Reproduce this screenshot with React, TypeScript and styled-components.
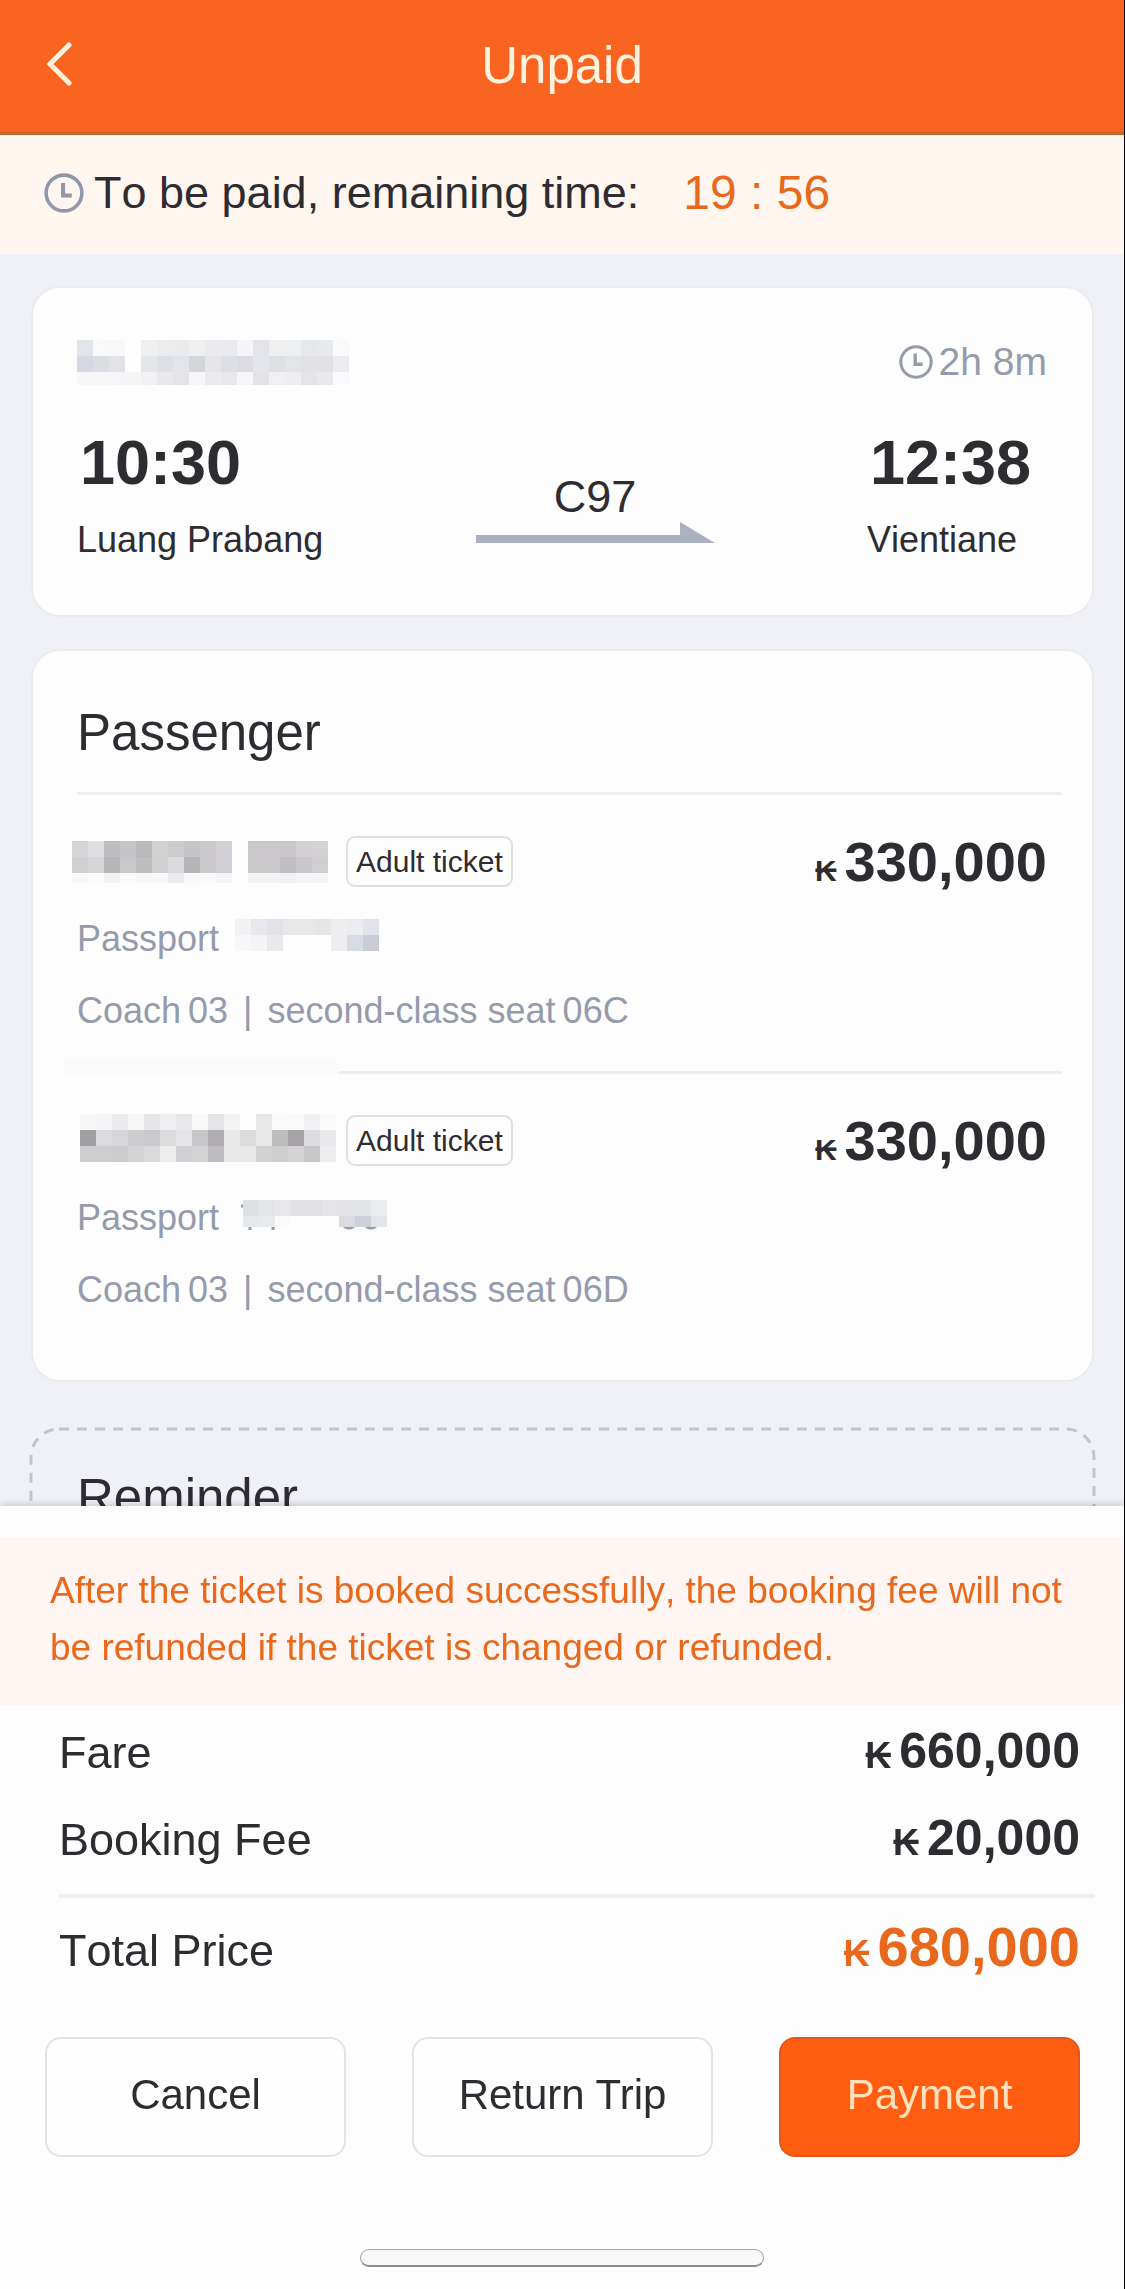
import React from "react";
import styled, { createGlobalStyle } from "styled-components";

const ink = "#2e2c30";
const muted = "#959bab";
const accent = "#e8691c";

const GlobalStyle = createGlobalStyle`
  *, *::before, *::after { box-sizing: border-box; }
  body {
    margin: 0;
    background: #fdfdfd;
    color: ${ink};
    font-family: "Liberation Sans", Arial, Helvetica, sans-serif;
    font-kerning: none;
  }
  h1, h2, p, dl, dt, dd { margin: 0; font-weight: 400; }
  svg { display: block; flex: none; }
`;

const Screen = styled.div`
  display: flex;
  flex-direction: column;
  height: 100vh;
  border-right: 1px solid #000;
`;

const Header = styled.header`
  display: grid;
  grid-template-columns: 1fr auto 1fr;
  align-items: center;
  height: 135px;
  padding: 0 40px;
  background: #f96521;
  border-bottom: 3px solid #c5642c;
`;

const BackButton = styled.button`
  justify-self: start;
  padding: 0;
  border: 0;
  background: none;
  color: #fff0d8;
`;

const HeaderTitle = styled.h1`
  font-size: 51px;
  line-height: 60px;
  color: #fff3e0;
`;

const Notice = styled.div`
  display: flex;
  align-items: center;
  height: 119px;
  padding: 0 44px 4px;
  background: #fff6f0;
  font-size: 45px;
  line-height: 60px;
`;

const NoticeLabel = styled.span`
  margin-left: 10px;
`;

const Countdown = styled.time`
  margin-left: 44px;
  font-size: 48px;
  color: ${accent};
`;

const Content = styled.main`
  flex: 1;
  min-height: 0;
  overflow-y: auto;
  scrollbar-width: none;
  padding: 32px 30px 0 31px;
  background: #f0f1f7;
`;

const Card = styled.section`
  margin-bottom: 32px;
  border: 2px solid #ececf0;
  border-radius: 29px;
  background: #fdfdfe;
`;

const TripCard = styled(Card)`
  padding: 51px 45px 53px 44px;
`;

const PassengerCard = styled(Card)`
  margin-bottom: 47px;
  padding: 52px 30px 30px 44px;
`;

const TripTop = styled.div`
  display: flex;
  justify-content: space-between;
  align-items: center;
  height: 46px;
  margin-bottom: 45px;
`;

const Duration = styled.span`
  display: flex;
  align-items: center;
  gap: 6px;
  font-size: 39px;
  line-height: 44px;
  color: ${muted};
`;

const Route = styled.div`
  display: flex;
  justify-content: space-between;
`;

const Stop = styled.div`
  min-width: 180px;
`;

const StopTime = styled.div`
  padding-left: 3px;
  font-size: 63px;
  font-weight: 700;
  line-height: 64px;
`;

const StopName = styled.div`
  margin-top: 24px;
  font-size: 36px;
  line-height: 44px;
`;

const Train = styled.div`
  display: flex;
  flex-direction: column;
  align-items: center;
  justify-content: flex-end;
  gap: 2px;
  padding-bottom: 19px;
  font-size: 45px;
  line-height: 46px;
`;

const SectionTitle = styled.h2`
  font-size: 51px;
  line-height: 60px;
`;

const Divider = styled.div<{ $masked?: boolean }>`
  position: relative;
  height: 3px;
  background: #eeeef1;

  &::before {
    content: "";
    display: ${(p) => (p.$masked ? "block" : "none")};
    position: absolute;
    left: -13px;
    bottom: -1px;
    width: 275px;
    height: 16px;
    background: #fbfbfc;
  }
`;

const PassengerHead = styled.div`
  padding-bottom: 29px;
`;

const Passenger = styled.article`
  padding: 41px 15px 38px 0;
`;

const NameRow = styled.div`
  display: flex;
  align-items: center;
  height: 51px;
  margin: 0 0 30px -5px;
`;

const TicketTag = styled.span`
  margin: 0 auto 0 10px;
  padding: 0 8px;
  border: 2px solid #dfdee3;
  border-radius: 9px;
  font-size: 30px;
  line-height: 47px;
`;

const Amount = styled.span<{ $size: number; $unit: number; $color?: string }>`
  font-size: ${(p) => p.$size}px;
  font-weight: 700;
  line-height: 60px;
  white-space: nowrap;
  color: ${(p) => p.$color ?? ink};

  small {
    margin-right: 8px;
    font-size: ${(p) => p.$unit}px;
    line-height: 1;
  }
`;

const Detail = styled.div`
  display: flex;
  align-items: center;
  height: 44px;
  font-size: 36px;
  line-height: 44px;
  color: ${muted};
`;

const DocumentRow = styled(Detail)`
  gap: 16px;
  margin-bottom: 28px;
`;

const SeatRow = styled(Detail)`
  gap: 7px;
`;

const Separator = styled.span`
  margin: 0 8px;
`;

const Reminder = styled.section`
  position: relative;
  height: 400px;
  padding: 39px 46px;
`;

const DashedOutline = styled.svg`
  position: absolute;
  inset: 0;
  width: 100%;
  height: 100%;
  overflow: visible;
`;

const Sheet = styled.footer`
  position: relative;
  padding: 31px 0 22px;
  background: #fdfdfd;
  box-shadow: 0 -1px 8px rgba(0, 0, 0, 0.2);
`;

const Warning = styled.p`
  padding: 25px 50px 29px;
  background: #fff5f3;
  font-size: 37px;
  line-height: 57px;
  color: ${accent};
`;

const Prices = styled.dl`
  padding: 16px 29px 0 59px;
`;

const PriceRow = styled.div`
  display: flex;
  justify-content: space-between;
  align-items: baseline;
  height: 60px;
  padding-right: 15px;
  font-size: 45px;
  line-height: 60px;

  & + & { margin-top: 27px; }
`;

const TotalBlock = styled.div`
  margin-top: 26px;
  padding-top: 19px;
  border-top: 4px solid #f0f0f1;
`;

const Actions = styled.div`
  display: grid;
  grid-template-columns: repeat(3, 1fr);
  gap: 66px;
  padding: 60px 44px 92px 45px;
`;

const ActionButton = styled.button<{ $primary?: boolean }>`
  height: 120px;
  padding: 0 0 4px;
  border: 2px solid ${(p) => (p.$primary ? "#e2581a" : "#e4e1e7")};
  border-radius: 16px;
  background: ${(p) => (p.$primary ? "#ff5e12" : "#fefefe")};
  color: ${(p) => (p.$primary ? "#ffe2bd" : ink)};
  font-family: inherit;
  font-size: 42px;
`;

const HomeIndicator = styled.div`
  width: 36%;
  height: 18px;
  margin: 0 auto;
  border: 1px solid #a5a5a5;
  border-bottom: 2px solid #8c8c8c;
  border-radius: 9px;
  background: #f8f8f8;
`;

function ClockIcon({ size, color }: { size: number; color: string }) {
  return (
    <svg width={size} height={size} viewBox="0 0 34 34" fill="none" stroke={color} strokeWidth="3" aria-hidden="true">
      <circle cx="17" cy="17" r="15.2" />
      <path d="M16.2 8.4v10.800h7.400" strokeWidth="3.4" />
    </svg>
  );
}

type MosaicProps = {
  rows: string[];
  width: number;
  height: number;
  left?: number;
  top?: number;
  last?: number;
  children?: React.ReactNode;
};

/* Each row is a space-separated list of colours; "-" leaves a cell empty. */
function Mosaic({ rows, width, height, left = 0, top = 0, last = 16, children }: MosaicProps) {
  return (
    <svg width={width} height={height} aria-hidden="true">
      {children}
      <g shapeRendering="crispEdges">
        {rows.map((row, y) =>
          row.split(" ").map((cell, x) =>
            cell === "-" ? null : (
              <rect
                key={`${x}-${y}`}
                x={left + x * 16}
                y={top + y * 16}
                width="16"
                height={y === rows.length - 1 ? last : 16}
                fill={`#${cell}`}
              />
            )
          )
        )}
      </g>
    </svg>
  );
}

const dateCells = [
  "e1e4e9 f7f9fa f8f8f9 - eeeff1 ebecee eaebed eeeff1 eaebed e8eaed f5f5f7 e2e4e8 eeeff1 eeeff1 e5e8eb e7eaec fafafb",
  "d6d9e3 dcdde3 e2e2e7 - e5e6ea dfe0e6 e3e4e9 d4d6dc e5e5ea dedfe4 dbdce2 e4e5ea dfe0e5 e3e4e8 e1e1e6 e1e1e6 ececf0",
  "f7f7f9 f7f7f8 f6f6f8 f5f5f6 f2f2f4 e9e9ec e4e4e8 f7f7f9 ebebee e8e8eb f6f6f8 e3e2e7 f0f0f3 eeedf1 e4e3e8 e9e9ed fafafc",
];

const firstNameCells = [
  "d5d4d6 dfdee1 bebdc1 c5c4c8 b9b8ba d2d2d3 cecbcf c6c4c8 cbc9cd d2d0d4 - cac8cb cac8cb c9c7cb d3d0d4 d4d2d5",
  "d0cfd1 d6d5d7 b6b5b7 c9c8cb bfbebf d0cfd1 dadadc b5b4b7 cac9cc d1cfd3 - cac8cb cac8cb c0bec1 c9c7ca d0ced1",
  "f8f8f8 fbfbfb f2f2f3 fafafa f8f8f9 f8f8f8 ebeaec f9f9f9 fafafa f4f3f5 - f3f3f4 f2f2f3 f1f0f2 f5f4f6 f5f4f6",
];

const secondNameCells = [
  "f7f7f8 f5f4f6 ebeaec f6f6f7 e6e5e8 efeef0 e7e6e9 f8f8f9 e4e4e6 f3f3f4 - e7e6e8 fbfbfb fafafb f0eff1 fafafb",
  "a19fa2 dcdbdd d7d7d9 cccbcd cbcacc dbdadd e4e3e5 c6c5c7 b0aeb2 e9e9ea dbdbdc e8e8e9 bfbebf a5a3a7 dcdbdd e9e8eb",
  "cecdd0 cfcdd0 cccbcd d4d3d5 dad9dc ededee d1cfd3 d4d3d6 bfbdc1 e9e8ea e8e7e9 d2d1d3 cecdcf d5d3d6 c8c6c9 eeedef",
];

const firstPassportCells = [
  "f2f2f5 e6e8eb e1e3e7 e6e8ea e6e8ea e4e6e8 eeeef1 ebecf0 e1e3e8",
  "f7f7f9 f4f4f6 e9e9ec - - - eeeef1 d9dbe2 cacdd6",
];

const secondPassportCells = [
  "dfe0e4 e3e4e7 e7e7eb e0e0e5 e1e1e5 e4e4e8 e2e3e7 e2e3e7 ebecf0",
  "e5e9ec e7ebee fafafb - - - d9dbe1 cfd1d9 e3e5ea",
];

const passengers = [
  {
    id: "c",
    seat: "06C",
    name: <Mosaic rows={firstNameCells} width={264} height={42} last={10} />,
    passport: <Mosaic rows={firstPassportCells} width={160} height={40} />,
  },
  {
    id: "d",
    seat: "06D",
    name: <Mosaic rows={secondNameCells} width={264} height={54} left={8} />,
    passport: (
      <Mosaic rows={secondPassportCells} width={160} height={40} left={8} top={2} last={11}>
        <path d="M15 26v6M38 26v6M107 26q7 8 14 0M129 26q7 8 14 0" fill="none" stroke={muted} strokeWidth="3" />
        <path d="M6 8h4" stroke={muted} strokeWidth="3" />
      </Mosaic>
    ),
  },
];

export default function App() {
  return (
    <>
      <GlobalStyle />
      <Screen>
        <Header>
          <BackButton type="button" aria-label="Back">
            <svg
              width="36"
              height="48"
              viewBox="0 0 36 48"
              fill="none"
              stroke="currentColor"
              strokeWidth="5"
              strokeLinecap="round"
              aria-hidden="true"
            >
              <path d="M29 3 10 22 29 41" />
            </svg>
          </BackButton>
          <HeaderTitle>Unpaid</HeaderTitle>
        </Header>
        <Notice>
          <ClockIcon size={40} color="#8f97a8" />
          <NoticeLabel>To be paid, remaining time:</NoticeLabel>
          <Countdown>19 : 56</Countdown>
        </Notice>
        <Content>
          <TripCard>
            <TripTop>
              <Mosaic rows={dateCells} width={272} height={45} last={13} />
              <Duration>
                <ClockIcon size={34} color={muted} />
                2h 8m
              </Duration>
            </TripTop>
            <Route>
              <Stop>
                <StopTime>10:30</StopTime>
                <StopName>Luang Prabang</StopName>
              </Stop>
              <Train>
                C97
                <svg width="239" height="21" viewBox="0 0 239 21" fill="#abb1c1" aria-hidden="true">
                  <path d="M0 13H204V0L239 21H0Z" />
                </svg>
              </Train>
              <Stop>
                <StopTime>12:38</StopTime>
                <StopName>Vientiane</StopName>
              </Stop>
            </Route>
          </TripCard>
          <PassengerCard>
            <PassengerHead>
              <SectionTitle>Passenger</SectionTitle>
            </PassengerHead>
            {passengers.map((p, i) => (
              <React.Fragment key={p.id}>
                <Divider $masked={i > 0} />
                <Passenger>
                  <NameRow>
                    {p.name}
                    <TicketTag>Adult ticket</TicketTag>
                    <Amount $size={56} $unit={30}>
                      <small>₭</small>330,000
                    </Amount>
                  </NameRow>
                  <DocumentRow>
                    Passport
                    {p.passport}
                  </DocumentRow>
                  <SeatRow>
                    <span>Coach</span>
                    <span>03</span>
                    <Separator>|</Separator>
                    <span>second-class seat</span>
                    <span>{p.seat}</span>
                  </SeatRow>
                </Passenger>
              </React.Fragment>
            ))}
          </PassengerCard>
          <Reminder>
            <DashedOutline aria-hidden="true">
              <rect width="100%" height="100%" rx="28" fill="none" stroke="#c3c4ca" strokeWidth="3" strokeDasharray="10 8" />
            </DashedOutline>
            <SectionTitle>Reminder</SectionTitle>
          </Reminder>
        </Content>
        <Sheet>
          <Warning>
            After the ticket is booked successfully, the booking fee will not be refunded if the ticket is changed or
            refunded.
          </Warning>
          <Prices>
            <PriceRow>
              <dt>Fare</dt>
              <Amount as="dd" $size={50} $unit={36}>
                <small>₭</small>660,000
              </Amount>
            </PriceRow>
            <PriceRow>
              <dt>Booking Fee</dt>
              <Amount as="dd" $size={50} $unit={36}>
                <small>₭</small>20,000
              </Amount>
            </PriceRow>
            <TotalBlock>
              <PriceRow>
                <dt>Total Price</dt>
                <Amount as="dd" $size={56} $unit={36} $color={accent}>
                  <small>₭</small>680,000
                </Amount>
              </PriceRow>
            </TotalBlock>
          </Prices>
          <Actions>
            <ActionButton type="button">Cancel</ActionButton>
            <ActionButton type="button">Return Trip</ActionButton>
            <ActionButton type="button" $primary>
              Payment
            </ActionButton>
          </Actions>
          <HomeIndicator />
        </Sheet>
      </Screen>
    </>
  );
}
